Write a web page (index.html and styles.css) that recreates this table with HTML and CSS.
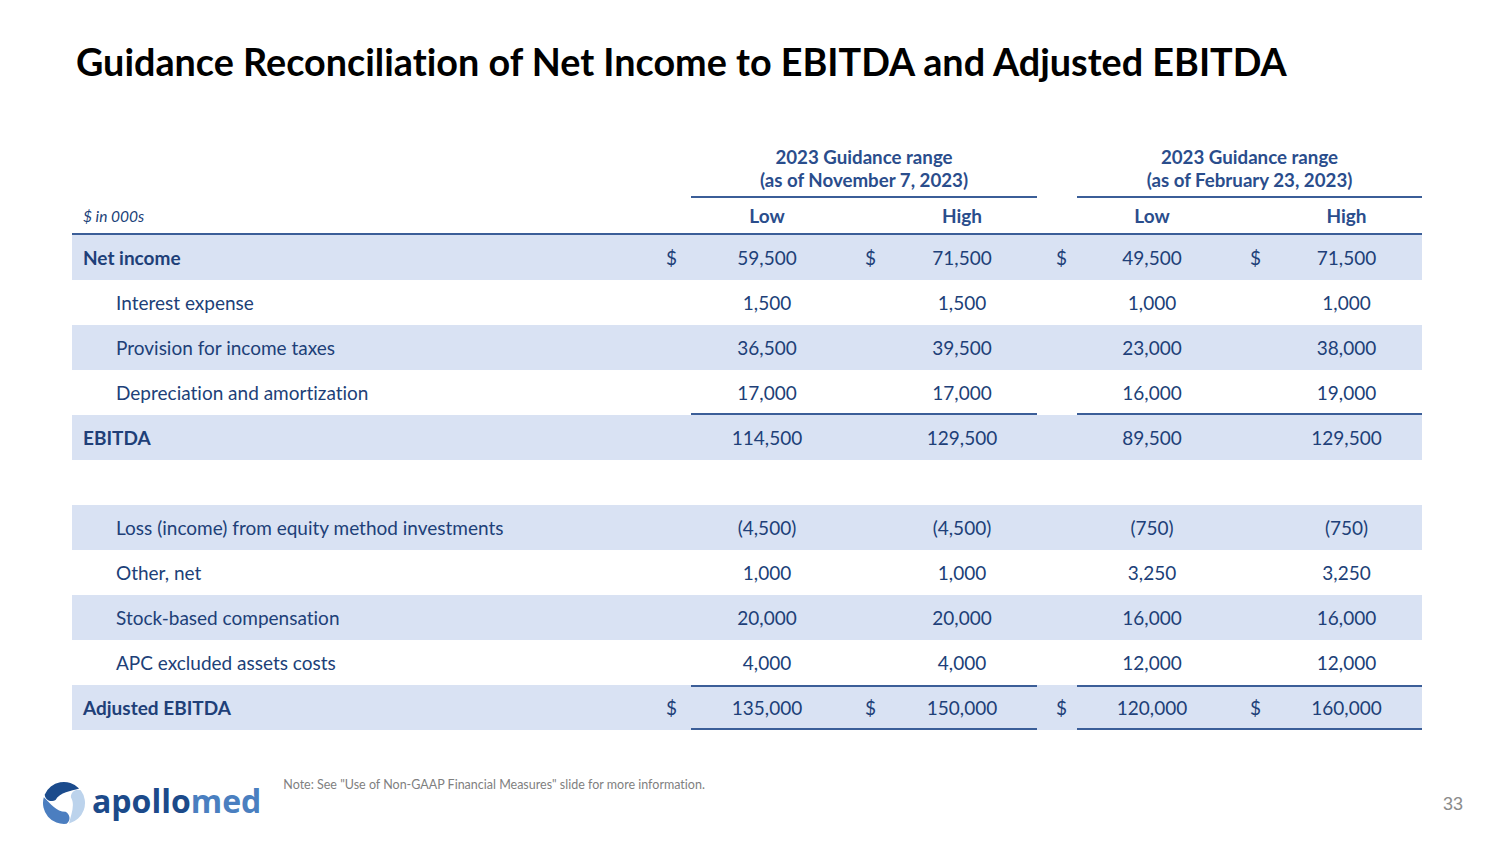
FILE: index.html
```html
<!DOCTYPE html>
<html lang="en">
<head>
<meta charset="utf-8">
<title>Guidance Reconciliation</title>
<link rel="stylesheet" href="styles.css">
</head>
<body>
<div class="slide">
  <h1 class="title">Guidance Reconciliation of Net Income to EBITDA and Adjusted EBITDA</h1>

  <div class="table">
    <div class="grp-row">
      <div class="grp-spacer"></div>
      <div class="grp">2023 Guidance range<br>(as of November 7, 2023)</div>
      <div class="grp-gap"></div>
      <div class="grp">2023 Guidance range<br>(as of February 23, 2023)</div>
    </div>
    <div class="row head">
      <div class="lbl unit">$ in 000s</div>
      <div></div>
      <div class="val">Low</div>
      <div></div>
      <div class="val">High</div>
      <div></div>
      <div class="val">Low</div>
      <div></div>
      <div class="val">High</div>
    </div>

    <div class="row shade">
      <div class="lbl bold">Net income</div>
      <div class="dol d1">$</div>
      <div class="val">59,500</div>
      <div class="dol d2">$</div>
      <div class="val">71,500</div>
      <div class="dol d3">$</div>
      <div class="val">49,500</div>
      <div class="dol d4">$</div>
      <div class="val">71,500</div>
    </div>
    <div class="row">
      <div class="lbl sub">Interest expense</div>
      <div></div>
      <div class="val">1,500</div>
      <div></div>
      <div class="val">1,500</div>
      <div></div>
      <div class="val">1,000</div>
      <div></div>
      <div class="val">1,000</div>
    </div>
    <div class="row shade">
      <div class="lbl sub">Provision for income taxes</div>
      <div></div>
      <div class="val">36,500</div>
      <div></div>
      <div class="val">39,500</div>
      <div></div>
      <div class="val">23,000</div>
      <div></div>
      <div class="val">38,000</div>
    </div>
    <div class="row">
      <div class="lbl sub">Depreciation and amortization</div>
      <div></div>
      <div class="val ub">17,000</div>
      <div class="ub"></div>
      <div class="val ub">17,000</div>
      <div></div>
      <div class="val ub">16,000</div>
      <div class="ub"></div>
      <div class="val ub">19,000</div>
    </div>
    <div class="row shade">
      <div class="lbl bold">EBITDA</div>
      <div></div>
      <div class="val">114,500</div>
      <div></div>
      <div class="val">129,500</div>
      <div></div>
      <div class="val">89,500</div>
      <div></div>
      <div class="val">129,500</div>
    </div>
    <div class="row">
      <div class="lbl"></div>
    </div>
    <div class="row shade">
      <div class="lbl sub">Loss (income) from equity method investments</div>
      <div></div>
      <div class="val">(4,500)</div>
      <div></div>
      <div class="val">(4,500)</div>
      <div></div>
      <div class="val">(750)</div>
      <div></div>
      <div class="val">(750)</div>
    </div>
    <div class="row">
      <div class="lbl sub">Other, net</div>
      <div></div>
      <div class="val">1,000</div>
      <div></div>
      <div class="val">1,000</div>
      <div></div>
      <div class="val">3,250</div>
      <div></div>
      <div class="val">3,250</div>
    </div>
    <div class="row shade">
      <div class="lbl sub">Stock-based compensation</div>
      <div></div>
      <div class="val">20,000</div>
      <div></div>
      <div class="val">20,000</div>
      <div></div>
      <div class="val">16,000</div>
      <div></div>
      <div class="val">16,000</div>
    </div>
    <div class="row">
      <div class="lbl sub">APC excluded assets costs</div>
      <div></div>
      <div class="val">4,000</div>
      <div></div>
      <div class="val">4,000</div>
      <div></div>
      <div class="val">12,000</div>
      <div></div>
      <div class="val">12,000</div>
    </div>
    <div class="row shade last">
      <div class="lbl bold">Adjusted EBITDA</div>
      <div class="dol d1">$</div>
      <div class="val tb">135,000</div>
      <div class="dol d2 tb">$</div>
      <div class="val tb">150,000</div>
      <div class="dol d3">$</div>
      <div class="val tb">120,000</div>
      <div class="dol d4 tb">$</div>
      <div class="val tb">160,000</div>
    </div>
  </div>

  <div class="footer">
    <div class="logo">
      <svg class="logo-icon" viewBox="-22 -22 44 44" width="44" height="44" aria-hidden="true">
        <path fill="#1b4b8c" d="M -19.33 -8.20 A 21 21 0 0 1 15.11 -14.59 C 7 -12 -4 -11 -8.46 -3.08 A 7 7 0 0 1 -19.33 -8.20 Z"/>
        <path fill="#bcd3ec" transform="rotate(120)" d="M -19.33 -8.20 A 21 21 0 0 1 15.11 -14.59 C 7 -12 -4 -11 -8.46 -3.08 A 7 7 0 0 1 -19.33 -8.20 Z"/>
        <path fill="#4b7ec0" transform="rotate(240)" d="M -19.33 -8.20 A 21 21 0 0 1 15.11 -14.59 C 7 -12 -4 -11 -8.46 -3.08 A 7 7 0 0 1 -19.33 -8.20 Z"/>
      </svg>
      <span class="logo-text"><span class="apollo">apollo</span><span class="med">med</span></span>
    </div>
    <div class="note">Note: See "Use of Non-GAAP Financial Measures" slide for more information.</div>
    <div class="page">33</div>
  </div>
</div>
</body>
</html>
```

FILE: styles.css
```css
* { box-sizing: border-box; }

html, body {
  margin: 0;
  padding: 0;
  background: #ffffff;
}

.slide {
  width: 1500px;
  height: 844px;
  display: flex;
  flex-direction: column;
  font-family: Lato, "Liberation Sans", sans-serif;
  font-variant-ligatures: no-common-ligatures;
  color: #203f78;
  overflow: hidden;
}

.title {
  margin: 40px 0 0 76px;
  font-family: Lato, "Liberation Sans", sans-serif;
  font-weight: 700;
  font-size: 37.75px;
  line-height: 44px;
  color: #000000;
}

.table {
  margin: 62px 0 0 72px;
  width: 1350px;
  font-size: 19px;
}

.grp-row,
.row {
  display: grid;
  grid-template-columns: 587px 32px 152px 44px 150px 40px 150px 44px 151px;
}

.grp-spacer { grid-column: 1 / span 2; }
.grp-gap { grid-column: 6; }

.grp {
  grid-column: span 3;
  text-align: center;
  font-size: 18.7px;
  font-weight: 700;
  line-height: 23px;
  padding-bottom: 4px;
  border-bottom: 2px solid #3b5e98;
  color: #2a4d8c;
}

.row {
  height: 45px;
  align-items: center;
}

.row > div {
  height: 100%;
  display: flex;
  align-items: center;
}

.row.head {
  height: 37px;
  border-bottom: 2px solid #3b5e98;
}

.row.head .val {
  font-weight: 700;
  color: #2a4d8c;
}

.shade {
  background: #d9e2f3;
}

.lbl {
  padding-left: 11px;
}

.lbl.sub {
  padding-left: 44px;
}

.lbl.bold {
  font-weight: 700;
}

.unit {
  font-style: italic;
  font-size: 15.5px;
}

.val {
  justify-content: center;
}

.dol { justify-content: flex-start; }
.d1 { padding-left: 7px; }
.d2 { padding-left: 22px; }
.d3 { padding-left: 19px; }
.d4 { padding-left: 23px; }

.ub {
  border-bottom: 2px solid #3b5e98;
  padding-top: 2px;
}

.tb {
  border-top: 2px solid #3b5e98;
  border-bottom: 2px solid #3b5e98;
}

.footer {
  margin-top: auto;
  height: 66px;
  display: flex;
  align-items: flex-start;
  padding-left: 42px;
  padding-right: 37px;
}

.logo {
  display: flex;
  align-items: center;
  gap: 6px;
  margin-top: 3px;
}

.logo-icon {
  display: block;
}

.logo-text {
  font-family: "Open Sans", "DejaVu Sans", sans-serif;
  font-weight: 700;
  font-size: 32px;
  letter-spacing: 0;
  line-height: 40px;
  position: relative;
  top: -2px;
}

.apollo { color: #1c4a8a; }
.med { color: #4a7fc0; }

.note {
  margin-left: 22px;
  font-size: 12.5px;
  color: #7f7f7f;
  line-height: 14px;
}

.page {
  margin-left: auto;
  margin-top: 16px;
  font-family: "Liberation Sans", Arial, sans-serif;
  font-size: 18px;
  color: #8c8c8c;
}
```
